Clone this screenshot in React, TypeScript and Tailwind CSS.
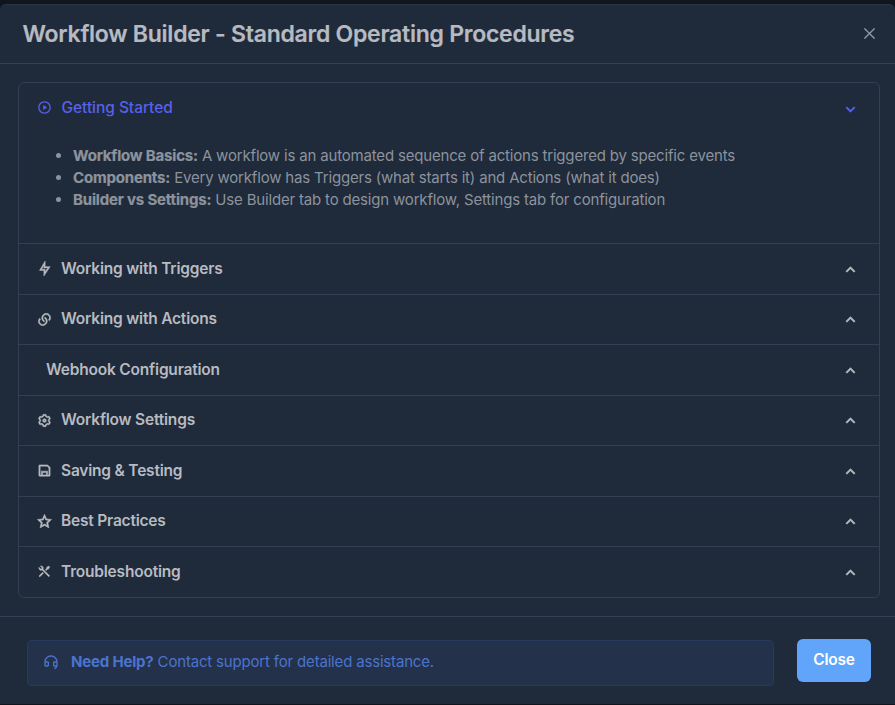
import { useState } from 'react';
import type { IconType } from 'react-icons';
import {
  RiArrowDownSLine,
  RiArrowUpSLine,
  RiCustomerServiceLine,
  RiFlashlightLine,
  RiLinksLine,
  RiPlayCircleLine,
  RiSaveLine,
  RiSettings3Line,
  RiStarLine,
  RiToolsLine,
} from 'react-icons/ri';
import clsx from 'clsx';

type Section = {
  title: string;
  icon?: IconType;
  items?: { term: string; text: string }[];
};

const sections: Section[] = [
  {
    title: 'Getting Started',
    icon: RiPlayCircleLine,
    items: [
      { term: 'Workflow Basics:', text: 'A workflow is an automated sequence of actions triggered by specific events' },
      { term: 'Components:', text: 'Every workflow has Triggers (what starts it) and Actions (what it does)' },
      { term: 'Builder vs Settings:', text: 'Use Builder tab to design workflow, Settings tab for configuration' },
    ],
  },
  { title: 'Working with Triggers', icon: RiFlashlightLine },
  { title: 'Working with Actions', icon: RiLinksLine },
  { title: 'Webhook Configuration' },
  { title: 'Workflow Settings', icon: RiSettings3Line },
  { title: 'Saving & Testing', icon: RiSaveLine },
  { title: 'Best Practices', icon: RiStarLine },
  { title: 'Troubleshooting', icon: RiToolsLine },
];

function AccordionItem({ section, open, onToggle }: { section: Section; open: boolean; onToggle: () => void }) {
  const { title, icon: Icon, items } = section;
  const Chevron = open ? RiArrowDownSLine : RiArrowUpSLine;

  return (
    <div className="border-b border-[#334052] last:border-b-0">
      <button
        onClick={onToggle}
        className={clsx(
          'flex h-[49.5px] w-full items-center pr-[20.5px] pl-[18px] text-[15.5px]',
          open ? 'font-medium tracking-[-0.05px] text-[#5761ea]' : 'font-semibold tracking-[-0.2px] text-[#b7bbc1]',
        )}
      >
        {Icon ? (
          <Icon size={15} className={clsx('mr-[9px]', open ? '[stroke-width:0.2]' : 'mb-[0.5px] [stroke-width:0.8]')} />
        ) : (
          <span className="w-[9px]" />
        )}
        <span className={open ? 'pl-[0.5px]' : 'pb-[0.5px]'}>{title}</span>
        <Chevron size={17} className={clsx('ml-auto [stroke-width:1]', open ? 'mt-[3px]' : 'mt-[0.5px]')} />
      </button>
      {open && items && (
        <ul className="list-disc pt-3 pb-[32.5px] pl-[54px] text-[15px] leading-[22px] tracking-[-0.18px] text-[#8c939d]">
          {items.map(({ term, text }) => (
            <li key={term}>
              <strong className="font-bold [-webkit-text-stroke:0.2px]">{term}</strong> {text}
            </li>
          ))}
        </ul>
      )}
    </div>
  );
}

export default function App() {
  const [openIndex, setOpenIndex] = useState(0);

  return (
    <div className="h-[705px] overflow-hidden bg-[#11161e] pt-1 font-['Inter',sans-serif]">
      <div className="flex h-[700px] flex-col rounded-t-md border-t border-[#2b3442] bg-[#1f2a3a]">
        <header className="flex h-[59px] shrink-0 items-center justify-between border-b border-[#334052] pr-5 pl-[22.5px]">
          <h1 className="text-[23px] font-semibold tracking-[-0.25px] text-[#b7bbc1] [-webkit-text-stroke:0.2px]">
            Workflow Builder - Standard Operating Procedures
          </h1>
          <button aria-label="Close" className="mb-px text-[#9298a1]">
            <svg width="11" height="11" viewBox="0 0 11 11" fill="none" stroke="currentColor" strokeWidth="1.4">
              <path d="M.4.4l10.2 10.2M10.6.4L.4 10.6" />
            </svg>
          </button>
        </header>
        <main className="pt-[18px] pr-[15px] pb-[18.5px] pl-[18px]">
          <div className="rounded-md border border-[#334052]">
            {sections.map((section, i) => (
              <AccordionItem
                key={section.title}
                section={section}
                open={openIndex === i}
                onToggle={() => setOpenIndex(openIndex === i ? -1 : i)}
              />
            ))}
          </div>
        </main>
        <footer className="flex items-start gap-[23px] border-t border-[#334052] pt-[22px] pr-6 pl-[27px]">
          <div className="mt-px flex h-[46px] flex-1 items-center rounded border border-[#27395c] bg-[#24314a] pb-0.5 pl-[15px] text-[15px] tracking-[-0.18px] text-[#4b74cd]">
            <RiCustomerServiceLine size={16} className="mr-3" />
            <p>
              <strong className="font-bold">Need Help?</strong> Contact support for detailed assistance.
            </p>
          </div>
          <button className="h-[43px] w-[74px] rounded-md bg-[#60a5fa] pb-0.5 text-[15.5px] font-semibold tracking-[-0.2px] text-white">
            Close
          </button>
        </footer>
      </div>
    </div>
  );
}
